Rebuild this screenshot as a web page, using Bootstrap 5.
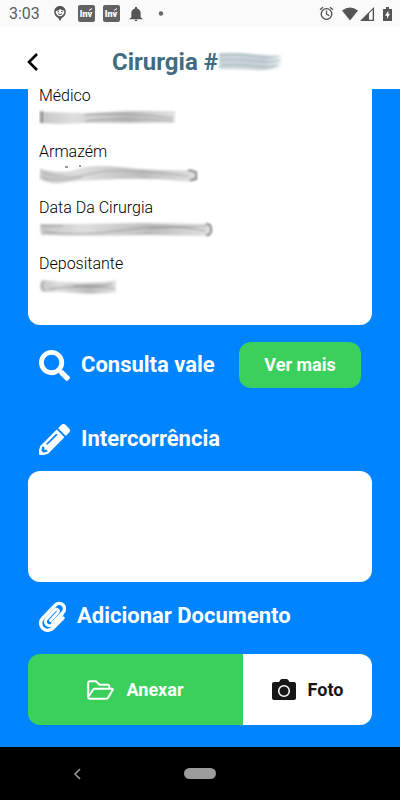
<!DOCTYPE html>
<html lang="pt-BR">
<head>
<meta charset="utf-8">
<meta name="viewport" content="width=device-width, initial-scale=1">
<title>Cirurgia</title>
<link href="https://cdn.jsdelivr.net/npm/bootstrap@5.3.0/dist/css/bootstrap.min.css" rel="stylesheet">
<style>
body { font-family: Roboto, "Liberation Sans", sans-serif; background: #0084ff; }
svg { display: block; flex-shrink: 0; }
.status-bar { height: 27px; padding: 0 8px 0 9px; background: #fafafa; color: #5c5c5c; font-size: 16px; line-height: 27px; z-index: 2; }
.notices { gap: 8px; }
.clock-text { margin-right: 6px; }
.title-bar { height: 62px; padding: 8px 24px 0; z-index: 2; }
.title-text { font-size: 24px; line-height: 32px; color: #3f6c7f; }
.side-slot { width: 84px; }
.screen-body { padding: 0 28px 22px; }
.panel { margin-top: -4px; padding: 1px 11px 15px; border-radius: 0 0 12px 12px; }
.field { height: 56px; margin: 0; }
.field dt { font-size: 16px; line-height: 20px; font-weight: 300; color: #000; }
.field dd { margin: 0; }
.section-title { font-size: 22px; line-height: 32px; margin: 0; }
.section-row { padding-left: 11px; gap: 11px; }
.row-query { margin-top: 17px; padding-right: 11px; }
.row-event { margin-top: 35px; margin-bottom: 16px; }
.row-doc { margin-top: 18px; margin-bottom: 22px; }
.btn-more { width: 122px; height: 46px; border-radius: 12px; font-size: 18px; line-height: 24px; }
.btn-green, .btn-green:hover { background: #3ad05b; color: #fff; }
.notes { height: 111px; border-radius: 12px; resize: none; }
.action-group { height: 71px; border-radius: 12px; overflow: hidden; }
.action-group .btn { font-size: 18px; line-height: 24px; border-radius: 0; gap: 12px; }
.attach { flex: 5 1 0; }
.photo, .photo:hover { flex: 3 1 0; background: #fff; color: #161616; }
.system-bar { height: 53px; background: #000; }
.system-back { padding-right: 30px; }
.home-pill { width: 32px; height: 11px; border-radius: 6px; background: #9c9c9c; }
.home-pill:hover { background: #9c9c9c; }
</style>
<script src="https://cdn.jsdelivr.net/npm/bootstrap@5.3.0/dist/js/bootstrap.bundle.min.js"></script>
</head>
<body class="min-vh-100 d-flex flex-column">
<div class="status-bar position-relative d-flex align-items-center justify-content-between">
  <div class="notices d-flex align-items-center">
    <span class="clock-text">3:03</span>
    <svg width="12" height="15" viewBox="0 0 12 15"><path fill="#555" d="M6 0C2.500 0 .2 2.500.2 5.800c0 3 2 5.300 4 6.200L6 15l1.800-3c2-.9 4-3.200 4-6.200C11.800 2.500 9.500 0 6 0z"/><path fill="#fafafa" d="M1.800 5Q5 5 6.200 3 8 4.500 10.200 4.500v2Q9 10.300 6 10.300T1.800 6.500z"/><path d="M3.500 5.800h1.600M7 5.500h1.600M4 7.800Q6 9.500 8 7.800" stroke="#555" fill="none"/></svg>
    <svg class="ms-1" width="17" height="17" viewBox="0 0 17 17"><rect width="17" height="17" rx="2" fill="#626262"/><text x="8" y="12" text-anchor="middle" font-size="9" font-weight="900" fill="#fff">Inv</text><path d="M11 5.500l3-2" stroke="#fff"/></svg>
    <svg width="17" height="17" viewBox="0 0 17 17"><rect width="17" height="17" rx="2" fill="#626262"/><text x="8" y="12" text-anchor="middle" font-size="9" font-weight="900" fill="#fff">Inv</text><path d="M11 5.500l3-2" stroke="#fff"/></svg>
    <svg width="16" height="16" viewBox="0 0 24 24"><path fill="#555" d="M12 23c1.200 0 2.200-1 2.200-2.200H9.800C9.800 22 10.800 23 12 23zm7-6.200V11c0-3.500-2-6.300-5.300-7.100V3a1.700 1.700 0 0 0-3.400 0v.9C7 4.700 5 7.500 5 11v5.800l-2.500 2v1h19v-1z"/></svg>
    <svg class="ms-1" width="8" height="5" viewBox="0 0 8 5"><circle cx="5" cy="2.500" r="2.200" fill="#666"/></svg>
  </div>
  <div class="d-flex align-items-center">
    <svg width="15" height="15" viewBox="0 0 15 15"><g fill="none" stroke="#505050" stroke-width="1.300"><circle cx="7.500" cy="8" r="5.300"/><path d="M7.500 4.500V8l2.600 1.700M1 3.700l3-2.500M14 3.700l-3-2.500"/></g></svg>
    <svg class="ms-2" width="16" height="14" viewBox="0 0 16 14"><path fill="#555" d="M8 13.500L0 3.500Q8-2.500 16 3.500z"/></svg>
    <svg width="17" height="14" viewBox="-2 0 17 14"><path fill="#555" d="M0 14L14 0v14z"/><path fill="#fafafa" d="M9 6.500l3.700-3.700v9.900H9z"/></svg>
    <svg class="ms-2" width="9" height="14" viewBox="0 0 9 14"><path fill="#555" d="M0 2h3V0h3v2h3v12H0z"/><path fill="#fafafa" d="M5.300 3.500L2 8.700h2v3.300l3-5.200H5.300z"/></svg>
  </div>
</div>
<header class="title-bar position-relative bg-white d-flex align-items-center">
  <div class="side-slot">
    <button class="btn p-0 border-0 d-block" type="button" aria-label="Voltar"><svg width="20" height="20" viewBox="0 0 20 20"><path d="M13 2L5 10l8 8" fill="none" stroke="#000" stroke-width="2.600"/></svg></button>
  </div>
  <h1 class="title-text fw-bold m-0 ps-1 d-flex align-items-center">Cirurgia #
    <svg width="72" height="24" viewBox="0 0 72 24" aria-hidden="true"><defs><linearGradient id="fadeTitle"><stop stop-color="#cdd8dc"/><stop offset=".7" stop-color="#c9d4d9"/><stop offset="1" stop-color="#fff"/></linearGradient><filter id="soft" x="-10%" y="-30%" width="120%" height="160%"><feGaussianBlur stdDeviation="1"/></filter></defs><g filter="url(#soft)"><path fill="url(#fadeTitle)" d="M1 3Q18 2 34 4T67 4L64 16Q56 21 36 20T1 19z"/><path d="M2 5Q20 3 38 6T60 6M2 10Q20 9 38 11T62 10M3 15Q22 14 38 16T60 15" stroke="#93a7af" stroke-width="1.500" fill="none" opacity=".6"/></g></svg>
  </h1>
</header>
<main class="screen-body flex-grow-1 d-flex flex-column">
  <section class="panel bg-white">
    <dl class="field"><dt>Médico</dt><dd><svg width="140" height="24" viewBox="0 0 140 24" aria-label="Oculto"><defs><linearGradient id="ink"><stop stop-color="#c5c5c5"/><stop offset=".25" stop-color="#dedede"/><stop offset=".65" stop-color="#bdbdbd"/><stop offset="1" stop-color="#e2e2e2"/></linearGradient></defs><g filter="url(#soft)"><path fill="url(#ink)" d="M0 5l5 1 40 1 45-2h46v12H45L20 18 0 17z"/><path d="M46 9q35-3 88 3M46 15q40-4 88 0" stroke="#777" fill="none" opacity=".7"/><path d="M3 5v12" stroke="#555" stroke-width="1.500" opacity=".8"/></g></svg></dd></dl>
    <dl class="field"><dt>Armazém</dt><dd><svg width="164" height="24" viewBox="0 0 164 24" aria-label="Oculto"><g filter="url(#soft)"><path fill="url(#ink)" d="M1 7q22 6 38 0t60 0q30 2 56 1l3 7-4 5q-35-4-70-3t-55 3Q14 24 1 17z"/><path d="M5 11q22 8 45 1t100 2M4 16q20 4 40-1" stroke="#888" fill="none" opacity=".6"/><path d="M149 8l8 2v7l-6 1" stroke="#555" stroke-width="1.500" fill="none"/></g><path d="M26 5h3M40 4h2" stroke="#333"/></svg></dd></dl>
    <dl class="field"><dt>Data Da Cirurgia</dt><dd><svg width="176" height="24" viewBox="0 0 176 24" aria-label="Oculto"><g filter="url(#soft)"><path fill="url(#ink)" d="M1 6h40l60-1 71 1v12l-60-1-60 1-50-1z"/><path d="M2 8h22M5 14q35 5 80-2t82 1M110 10l58-2" stroke="#777" fill="none" opacity=".6"/><path d="M167 6q5 0 5 4v3q0 4-5 4" stroke="#555" stroke-width="1.500" fill="none"/></g></svg></dd></dl>
    <dl class="field"><dt>Depositante</dt><dd><svg width="82" height="24" viewBox="0 0 82 24" aria-label="Oculto"><g filter="url(#soft)"><path fill="url(#ink)" d="M4 6q20 3 40 3t33-3v12q-20 3-40 1T5 18Q1 17 1 12t3-6z"/><path d="M10 15q30-4 65-1M35 12q22 1 38-2M5 7q-4 5 0 10" stroke="#777" fill="none" opacity=".7"/></g></svg></dd></dl>
  </section>

  <div class="section-row row-query d-flex align-items-center">
    <svg width="31" height="31" viewBox="0 0 512 512" fill="#fff"><path d="M505 442.700L405.300 343c-4.500-4.500-10.600-7-17-7H372c27.600-35.300 44-79.700 44-128C416 93.100 322.900 0 208 0S0 93.100 0 208s93.100 208 208 208c48.300 0 92.700-16.400 128-44v16.300c0 6.400 2.500 12.500 7 17l99.700 99.700c9.400 9.400 24.600 9.400 33.900 0l28.300-28.300c9.400-9.400 9.400-24.600.1-34zM208 336c-70.700 0-128-57.200-128-128 0-70.700 57.200-128 128-128 70.700 0 128 57.200 128 128 0 70.700-57.200 128-128 128z"/></svg>
    <h2 class="section-title text-white fw-bold text-nowrap">Consulta vale</h2>
    <button class="btn btn-green btn-more border-0 p-0 fw-bold ms-auto" type="button">Ver mais</button>
  </div>

  <div class="section-row row-event d-flex align-items-center">
    <svg width="31" height="31" viewBox="0 0 512 512" fill="#fff"><path d="M497.900 142.100l-46.100 46.100c-4.700 4.700-12.300 4.700-17 0l-111-111c-4.700-4.700-4.700-12.300 0-17l46.100-46.100c18.700-18.700 49.100-18.700 67.900 0l60.100 60.100c18.800 18.700 18.800 49.100 0 67.900zM284.200 99.800L21.600 362.400 0 430v62q0 20 20 20h62l67.700-21.600 262.600-262.600c4.700-4.700 4.700-12.300 0-17l-111-111c-4.800-4.700-12.400-4.700-17.100 0zM124.100 339.900c-5.500-5.500-5.500-14.300 0-19.800l154-154c5.500-5.500 14.300-5.500 19.800 0s5.500 14.300 0 19.800l-154 154c-5.500 5.500-14.300 5.500-19.800 0zM88 424h48v36.300l-64.500 11.300-31.100-31.100L51.700 376H88v48z"/></svg>
    <label for="notes" class="section-title text-white fw-bold">Intercorrência</label>
  </div>
  <textarea id="notes" class="notes form-control border-0"></textarea>

  <div class="section-row row-doc d-flex align-items-center">
    <svg width="27" height="31" viewBox="0 0 27 31"><path d="M11.500 19.500L18.800 11.500a1.800 1.800 0 0 0-3-2.500L7.500 18a4 4 0 0 0 6 5.500L23.500 13" fill="none" stroke="#fff" stroke-width="3" stroke-linecap="round"/><path d="M24 17L14 27a7 7 0 0 1-10.500-9.500L16.500 4a5.200 5.200 0 0 1 7.500 7.500L14 22" fill="none" stroke="#fff" stroke-width="3.400" stroke-linecap="round"/></svg>
    <h2 class="section-title text-white fw-bold">Adicionar Documento</h2>
  </div>
  <div class="action-group d-flex">
    <button class="attach btn btn-green border-0 px-0 fw-bold d-flex align-items-center justify-content-center" type="button">
      <svg width="27" height="20" viewBox="0 0 27 20"><path d="M1.200 17V3q0-1.800 1.800-1.800h6l3.500 3.500h8q1.800 0 1.800 1.800v2.300M1.200 17L6 9.800q.7-1 2-1h17q1.300 0 .6 1.200L21.500 17q-.8 1.700-2.300 1.700H3Q1.200 18.700 1.200 17z" fill="none" stroke="#fff" stroke-width="2" stroke-linejoin="round"/></svg>
      Anexar
    </button>
    <button class="photo btn border-0 px-0 fw-bold d-flex align-items-center justify-content-center" type="button">
      <svg width="24" height="21" viewBox="0 0 24 21"><path fill="#161616" d="M2 3h5l1.300-2Q9 0 10 0h4.500q1 0 1.700 1l1.300 2H22q2 0 2 2v14q0 2-2 2H2q-2 0-2-2V5q0-2 2-2z"/><circle cx="12" cy="12" r="5.300" fill="none" stroke="#fff" stroke-width="1.500"/></svg>
      Foto
    </button>
  </div>
</main>
<nav class="system-bar d-flex align-items-center justify-content-center" aria-label="Sistema">
  <div class="col"><div class="system-back d-flex justify-content-center"><button class="btn p-0 border-0" type="button" aria-label="Voltar"><svg width="8" height="12" viewBox="0 0 8 12"><path d="M7 1L2 6l5 5" fill="none" stroke="#999" stroke-width="1.600"/></svg></button></div></div>
  <button class="home-pill btn p-0 border-0 d-block" type="button" aria-label="Início"></button>
  <div class="col"></div>
</nav>
</body>
</html>
